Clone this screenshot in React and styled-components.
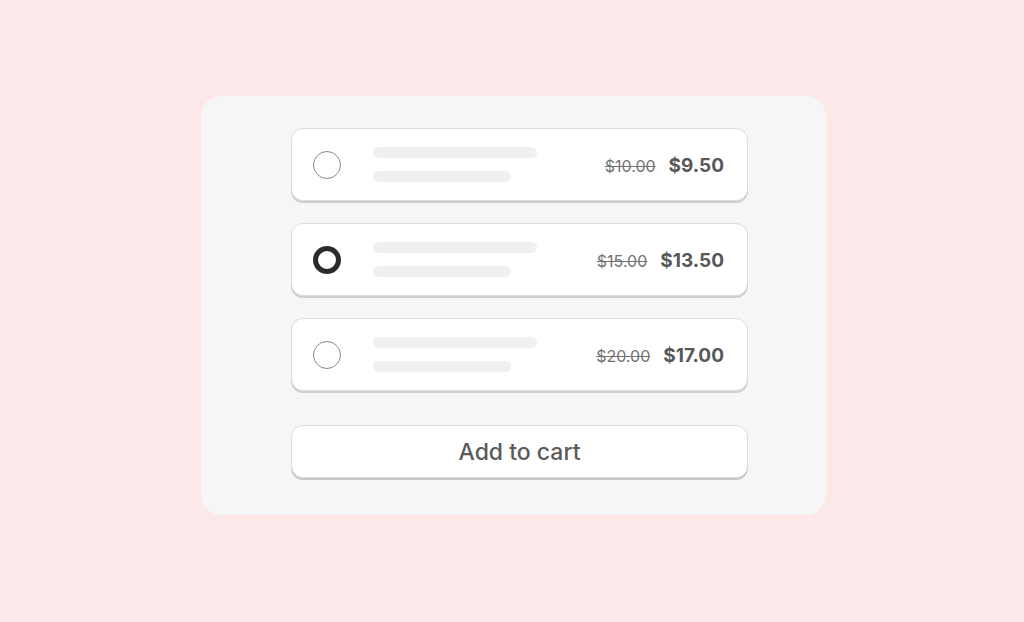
import React, { useState } from 'react'
import styled, { createGlobalStyle } from 'styled-components'

const GlobalStyle = createGlobalStyle`
  html, body {
    margin: 0;
    padding: 0;
    background: #fce8e8;
    font-family: Inter, "Noto Sans", sans-serif;
  }
`

const Page = styled.div`
  width: 1024px;
  height: 622px;
  display: flex;
  justify-content: center;
  align-items: flex-start;
  padding-top: 96px;
  box-sizing: border-box;
`

const Panel = styled.div`
  width: 625px;
  margin-left: 3px;
  background: #f6f6f6;
  border-radius: 20px;
  padding: 32px 78px 37px 90px;
  box-sizing: border-box;
  display: flex;
  flex-direction: column;
  gap: 22px;
`

const Option = styled.div`
  height: 73px;
  background: #fff;
  border: 1px solid #dcdcdc;
  border-radius: 12px;
  box-shadow: 0 2px 0 #cfcfcf;
  box-sizing: border-box;
  display: flex;
  align-items: center;
  padding: 0 23px 0 21px;
  cursor: pointer;
`

const Radio = styled.span`
  width: 28px;
  height: 28px;
  border-radius: 50%;
  box-sizing: border-box;
  border: ${({ checked }) => (checked ? '5px solid #2b2b2b' : '1px solid #8a8a8a')};
  flex-shrink: 0;
`

const Lines = styled.div`
  display: flex;
  flex-direction: column;
  gap: 13px;
  margin-left: 32px;
  flex: 1;
`

const Line = styled.span`
  display: block;
  height: 11px;
  width: ${({ w }) => w}px;
  border-radius: 6px;
  background: #f0f0f0;
`

const Prices = styled.div`
  display: flex;
  align-items: baseline;
  gap: 13px;
  margin-top: 2px;
`

const OldPrice = styled.span`
  font-size: 16px;
  color: #737373;
  text-decoration: line-through;
`

const Price = styled.span`
  font-size: 19px;
  font-weight: 700;
  color: #585858;
`

const CartButton = styled.button`
  margin-top: 12px;
  height: 53px;
  background: #fff;
  border: 1px solid #dcdcdc;
  border-radius: 12px;
  box-shadow: 0 2px 0 #c8c8c8;
  font-family: Inter, "Noto Sans", sans-serif;
  font-size: 23px;
  font-weight: 500;
  color: #5a5a5a;
  cursor: pointer;
`

const options = [
  { old: '$10.00', price: '$9.50' },
  { old: '$15.00', price: '$13.50' },
  { old: '$20.00', price: '$17.00' },
]

export default function App() {
  const [selected, setSelected] = useState(1)
  return (
    <Page>
      <GlobalStyle />
      <Panel>
        {options.map((o, i) => (
          <Option key={o.price} onClick={() => setSelected(i)}>
            <Radio checked={selected === i} />
            <Lines>
              <Line w={164} />
              <Line w={138} />
            </Lines>
            <Prices>
              <OldPrice>{o.old}</OldPrice>
              <Price>{o.price}</Price>
            </Prices>
          </Option>
        ))}
        <CartButton>Add to cart</CartButton>
      </Panel>
    </Page>
  )
}
